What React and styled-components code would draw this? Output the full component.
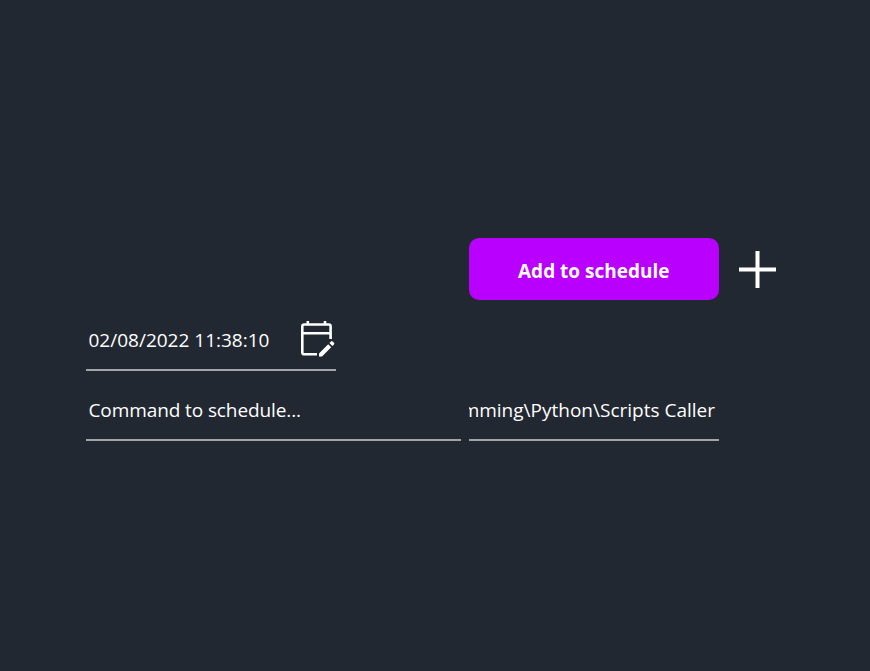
import React from "react";
import styled, { createGlobalStyle } from "styled-components";

const GlobalStyle = createGlobalStyle`
  * { box-sizing: border-box; }
  body { margin: 0; background: #222831; }
`;

const Page = styled.main`
  height: 671px;
  padding: 238px 0 0 86px;
  overflow: hidden;
  background: #222831;
  color: #fff;
  font-family: "Segoe UI", "Open Sans", "Noto Sans", sans-serif;
`;

const Layout = styled.div`
  display: grid;
  grid-template-columns: 375px 250px 37px;
  grid-template-rows: 62.5px 70px 70px;
  column-gap: 8px;
`;

const AddButton = styled.button`
  grid-column: 2;
  height: 62px;
  width: 249.5px;
  padding: 4px 0 0;
  border: 0;
  border-radius: 10px;
  background: #b900ff;
  color: #fff;
  font: 700 19px/28px "Segoe UI", "Open Sans", "Noto Sans", sans-serif;
  white-space: nowrap;
`;

const PlusButton = styled.button`
  grid-column: 3;
  width: 37px;
  height: 37px;
  margin: 13px 0 0 12px;
  padding: 0;
  border: 0;
  background: none;
  svg { display: block; }
`;

const Field = styled.div`
  display: flex;
  grid-column: ${(p) => p.$column};
  width: ${(p) => p.$width}px;
  height: 70px;
  padding: 25px 4px 0 2.5px;
  border-bottom: 2px solid #a2a4a8;
  justify-content: ${(p) => (p.$end ? "flex-end" : "space-between")};
  overflow: hidden;
`;

const Value = styled.span`
  flex: none;
  font-size: 19px;
  line-height: 28px;
  letter-spacing: ${(p) => p.$spacing}px;
  white-space: pre;
`;

const CalendarIcon = styled.svg`
  flex: none;
  width: 36px;
  height: 38px;
  margin: -6px -4px 0 0;
`;

export default function App() {
  return (
    <>
      <GlobalStyle />
      <Page>
        <Layout>
          <AddButton>Add to schedule</AddButton>
          <PlusButton aria-label="Add">
            <svg width="37" height="37" viewBox="0 0 37 37">
              <path d="M18.5 0V37M0 18.5H37" stroke="#fff" strokeWidth="4" />
            </svg>
          </PlusButton>
          <Field $column={1} $width={250}>
            <Value $spacing={0}>02/08/2022 11:38:10</Value>
            <CalendarIcon viewBox="0 0 36 38" fill="none">
              <path
                d="M17 34.2H4.2Q2.3 34.2 2.3 32.4V6.3Q2.3 4.5 4.2 4.5H28.8Q30.6 4.5 30.6 6.3V19M2.3 13.2H30.6M7.8 1V5M25 1V5"
                stroke="#fff"
                strokeWidth="2.6"
              />
              <path d="M19 36.4V33.4L28.2 24.2L31.2 27.2L22 36.4ZM29.4 23L31 21.4Q31.8 20.8 32.6 21.4L34 22.8Q34.7 23.6 34 24.4L32.4 26Z" fill="#fff" />
            </CalendarIcon>
          </Field>
          <Field $column={1} $width={375}>
            <Value $spacing={-0.1}>Command to schedule...</Value>
          </Field>
          <Field $column={2} $width={250} $end>
            <Value $spacing={0}>D:\Programming\Python\Scripts Caller</Value>
          </Field>
        </Layout>
      </Page>
    </>
  );
}
